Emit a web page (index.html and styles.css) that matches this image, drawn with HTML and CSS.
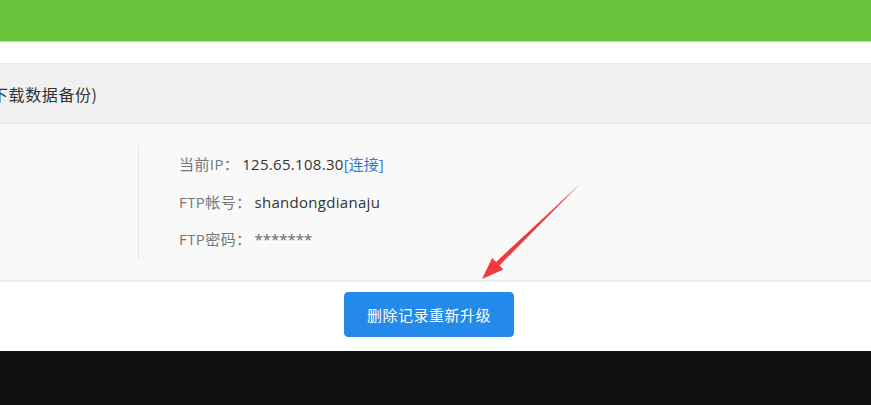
FILE: index.html
```html
<!DOCTYPE html>
<html lang="zh-CN">
<head>
<meta charset="utf-8">
<title>升级</title>
<link rel="stylesheet" href="styles.css">
</head>
<body>
<div class="topbar"></div>
<div class="gap"></div>
<div class="panel">
  <div class="panel-head"><span class="head-text">下载数据备份)</span></div>
  <div class="panel-body">
    <div class="side"></div>
    <div class="info">
      <div class="row"><span class="label">当前IP：</span><span class="value">125.65.108.30</span><a class="link" href="#">[连接]</a></div>
      <div class="row"><span class="label">FTP帐号：</span><span class="value">shandongdianaju</span></div>
      <div class="row"><span class="label">FTP密码：</span><span class="value stars">*******</span></div>
    </div>
  </div>
</div>
<div class="actions">
  <button class="btn">删除记录重新升级</button>
</div>
<div class="footer"></div>
<svg class="arrow" width="871" height="405" viewBox="0 0 871 405" aria-hidden="true">
  <polygon points="580,184 499.5,265.5 503.4,269.4 482,279 492.2,258 496.1,261.9" fill="#f23a3a"/>
</svg>
</body>
</html>
```
FILE: styles.css
```css
html, body {
  margin: 0;
  padding: 0;
  background: #ffffff;
}
body {
  font-family: "Open Sans", "Noto Sans CJK SC", sans-serif;
  color: #333;
  position: relative;
  width: 871px;
  height: 405px;
  overflow: hidden;
}
.topbar {
  height: 41px;
  background: #68c43b;
  border-bottom: 1px solid #b9e3a2;
}
.gap {
  height: 21px;
}
.panel {
  border-top: 1px solid #eaeaea;
}
.panel-head {
  height: 59px;
  background: #f0f0f0;
  border-bottom: 1px solid #e9e9e9;
  display: flex;
  align-items: center;
  font-family: "Noto Sans CJK SC", sans-serif;
  font-size: 16px;
  color: #333;
}
.head-text {
  margin-left: -8px;
  letter-spacing: 0.6px;
}
.panel-body {
  background: #f9f9f9;
  border-bottom: 2px solid #efefef;
  padding: 22px 0 21.5px 0;
  display: flex;
}
.side {
  width: 138px;
}
.info {
  border-left: 1px solid #e4e4e4;
  padding-left: 40px;
  font-size: 15px;
}
.row {
  height: 37.5px;
  line-height: 37.5px;
  white-space: nowrap;
}
.label {
  color: #777;
  letter-spacing: 0.4px;
  margin-right: 3px;
}
.value {
  color: #333;
  letter-spacing: 0.3px;
}
.stars {
  color: #666;
  letter-spacing: 0;
}
.link {
  color: #2a7fd4;
  text-decoration: none;
}
.actions {
  height: 69px;
  padding-left: 344px;
  box-sizing: border-box;
  padding-top: 10px;
}
.btn {
  width: 170px;
  height: 45px;
  background: #2389ea;
  color: #fff;
  border: 1px solid #2a8ae6;
  border-radius: 4px;
  font-family: "Noto Sans CJK SC", sans-serif;
  font-size: 15px;
  padding: 0;
  letter-spacing: 0.5px;
}
.footer {
  height: 54px;
  background: #0f0f0f;
}
.arrow {
  position: absolute;
  left: 0;
  top: 0;
  pointer-events: none;
}
```
